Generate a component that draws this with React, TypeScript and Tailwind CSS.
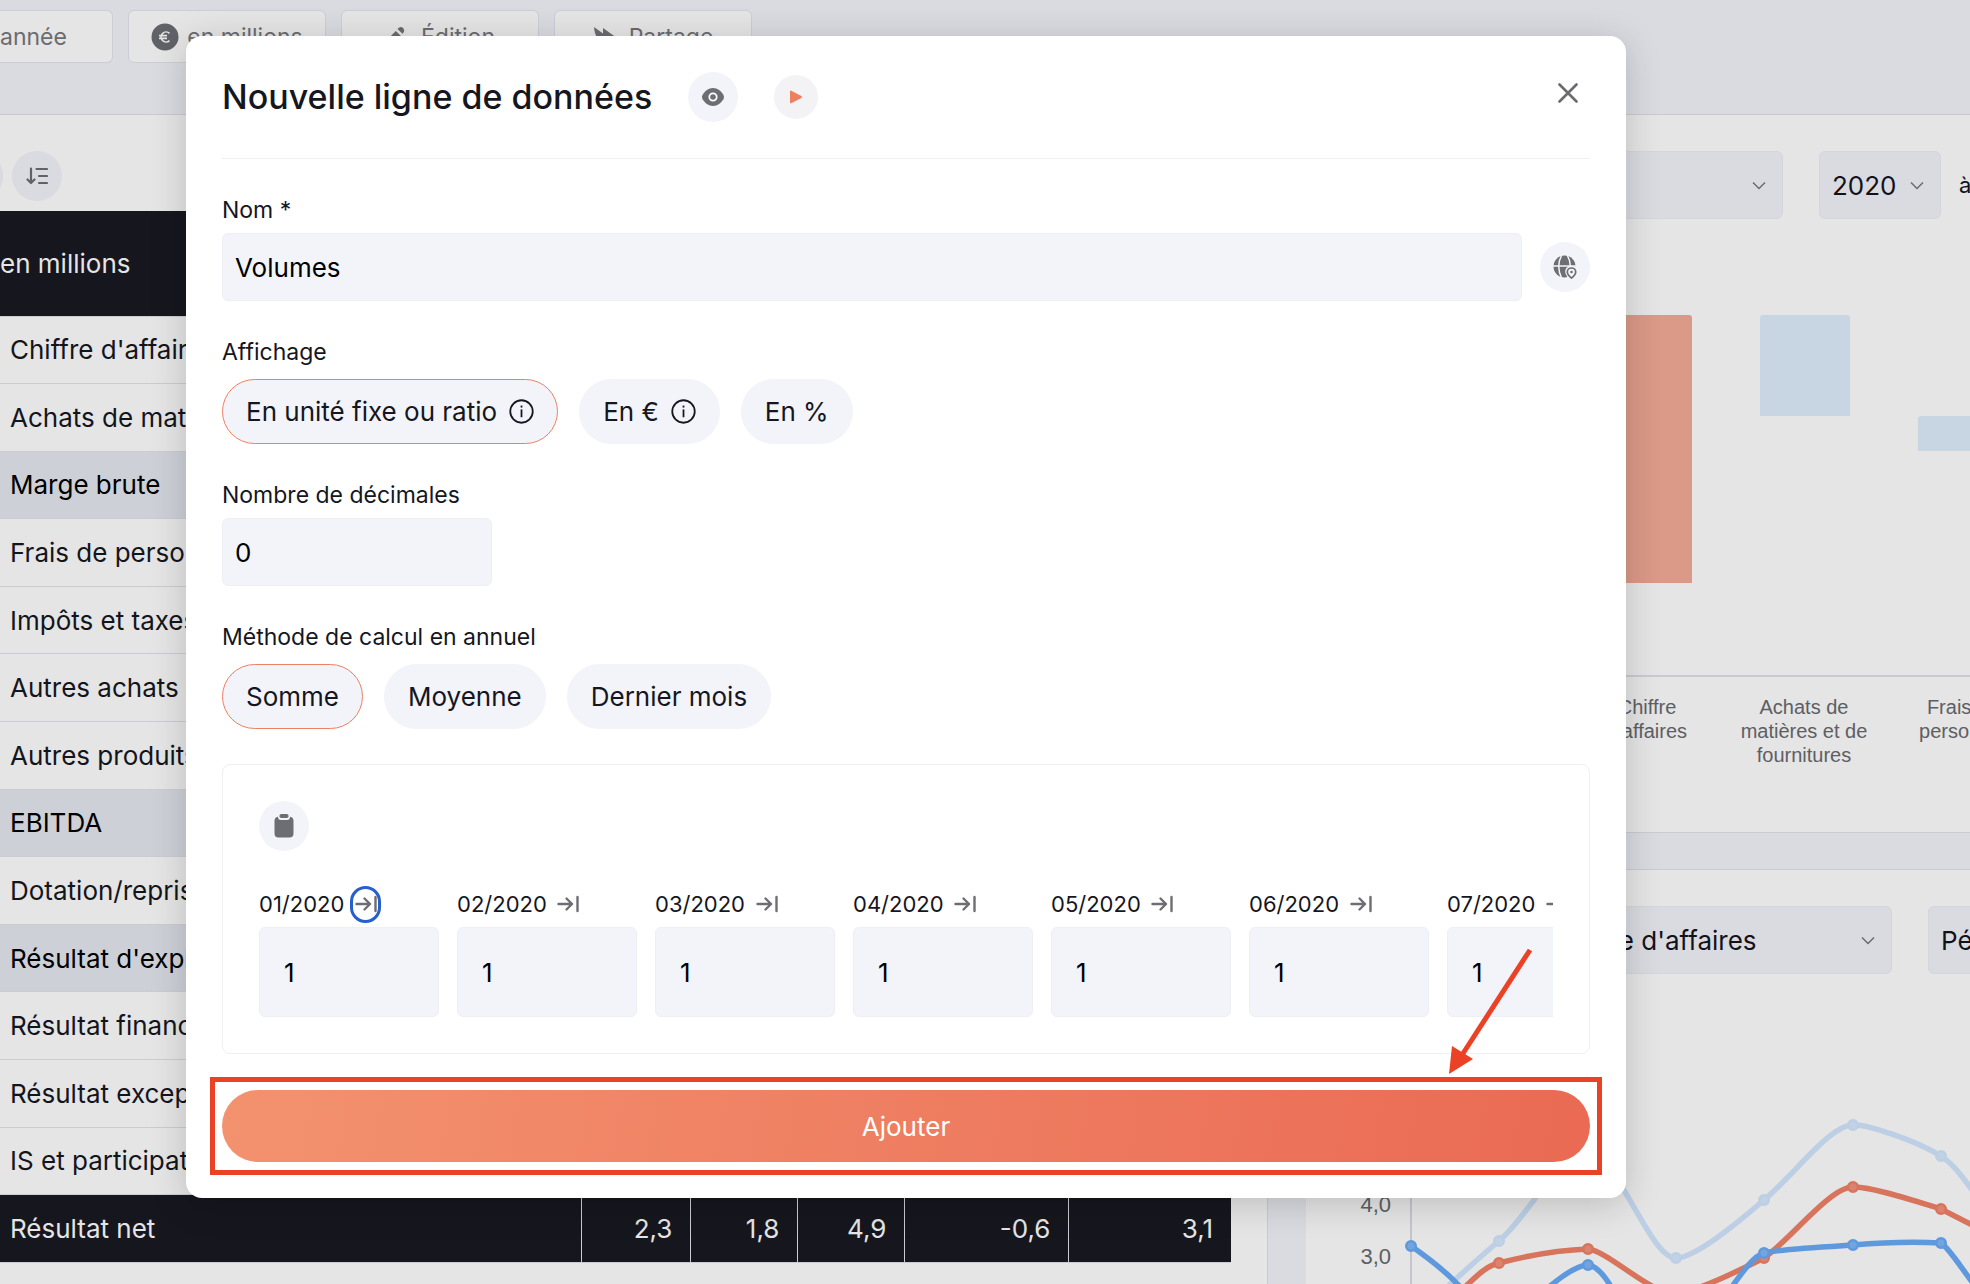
import type { ReactNode } from "react";

const ROWS = [
  { label: "Chiffre d'affaires" },
  { label: "Achats de matières" },
  { label: "Marge brute", total: true },
  { label: "Frais de personnel" },
  { label: "Impôts et taxes" },
  { label: "Autres achats" },
  { label: "Autres produits" },
  { label: "EBITDA", total: true },
  { label: "Dotation/reprise" },
  { label: "Résultat d'exploitation", total: true },
  { label: "Résultat financier" },
  { label: "Résultat exceptionnel" },
  { label: "IS et participation" },
];

const NET = ["2,3", "1,8", "4,9", "-0,6", "3,1"];

const MONTHS = ["01/2020", "02/2020", "03/2020", "04/2020", "05/2020", "06/2020", "07/2020"];

function TopButton({ icon, className = "w-[198px] justify-center rounded-md border", children }: { icon?: ReactNode; className?: string; children: ReactNode }) {
  return (
    <button className={`flex h-[53px] shrink-0 items-center gap-2 border-[#e2e5f0] bg-white text-[23px] leading-7 text-[#77787d] ${className}`}>
      {icon}
      {children}
    </button>
  );
}

function RoundButton({ label, children }: { label: string; children: ReactNode }) {
  return (
    <button
      type="button"
      aria-label={label}
      className="flex size-[50px] shrink-0 items-center justify-center rounded-full bg-[#f3f4fa] text-[#6d6e73]"
    >
      {children}
    </button>
  );
}

function Select({ label, value, className }: { label: string; value: string; className: string }) {
  return (
    <div className={`relative h-[68px] shrink-0 ${className}`}>
      <select
        aria-label={label}
        className="size-full appearance-none rounded-md border border-[#eeeff5] bg-[#f3f4fa] px-3 text-[26px] text-[#15161e]"
      >
        <option>{value}</option>
      </select>
      <svg className="pointer-events-none absolute top-[30px] right-[17px]" width="14" height="10" viewBox="0 0 14 10" fill="none" stroke="#77787d" strokeWidth="1.5">
        <path d="M1 1.5l6 6 6-6" />
      </svg>
    </div>
  );
}

function Pill({ name, label, checked, info }: { name: string; label: string; checked?: boolean; info?: boolean }) {
  return (
    <label className="relative flex h-[65px] items-center gap-3 rounded-full border border-[#f3f4fa] bg-[#f3f4fa] px-[23px] text-[26px] text-[#15161e] has-checked:border-[#ee8062]">
      <input type="radio" name={name} defaultChecked={checked} className="sr-only" />
      {label}
      {info && (
        <svg width="25" height="25" viewBox="0 0 24 24" fill="none" stroke="currentColor" strokeWidth="1.7">
          <circle cx="12" cy="12" r="10.8" />
          <path d="M12 10v7.5" />
          <path d="M12 6.3v1.9" />
        </svg>
      )}
    </label>
  );
}

function EyeIcon() {
  return (
    <svg width="24" height="20" viewBox="0 0 24 20">
      <path fill="currentColor" d="M12 1c4.600 0 8.200 3.200 10.400 6.700q1.400 2.300 0 4.600C20.200 15.800 16.600 19 12 19S3.800 15.800 1.600 12.300q-1.400-2.300 0-4.600C3.800 4.200 7.400 1 12 1z" />
      <circle cx="12" cy="10" r="3.700" fill="none" stroke="#fff" strokeWidth="1.800" />
    </svg>
  );
}

function GlobeIcon() {
  return (
    <svg width="24" height="24" viewBox="0 0 24 24">
      <circle cx="11.500" cy="11.500" r="11" fill="currentColor" />
      <g fill="none" stroke="#f3f4fa" strokeWidth="1.500">
        <path d="M0 11h24M8.800 0C5 7 5 16 8.800 23.500M14.200 0c3.800 7 3.800 16 0 23.500" />
      </g>
      <path fill="#f3f4fa" d="M18.500 10.800c-3.700 0-6.300 2.600-6.300 5.900 0 3.100 2.500 5.300 4.500 7.300H24V13.500c-1.200-1.700-3.200-2.700-5.500-2.700z" />
      <path d="M18.500 13c-2.400 0-4.200 1.700-4.200 4 0 2.600 2.600 4.800 4.200 6 1.600-1.200 4.200-3.400 4.200-6 0-2.300-1.800-4-4.200-4z" fill="none" stroke="currentColor" strokeWidth="1.700" />
      <circle cx="18.500" cy="17" r="1.300" fill="currentColor" />
    </svg>
  );
}

function ClipboardIcon() {
  return (
    <svg width="20" height="24" viewBox="0 0 20 24" fill="currentColor">
      <rect x="5.500" y="0" width="9" height="4" rx="1.800" />
      <path d="M3.800 2.700h.2c0 2 1 3.300 3 3.300h6c2 0 3-1.300 3-3.300h.2Q19.500 3.300 19.500 7v12.500q0 4-4 4h-11q-4 0-4-4V7q0-3.700 3.300-4.300z" />
    </svg>
  );
}

function SortIcon() {
  return (
    <svg width="22" height="18" viewBox="0 0 22 18" fill="none" stroke="currentColor" strokeWidth="2.200" strokeLinecap="round" strokeLinejoin="round">
      <path d="M5 1.500v14M1.500 12.500L5 16l3.500-3.500M10.500 2H21M13 9h8M13 16h8" />
    </svg>
  );
}

function FillRightIcon() {
  return (
    <svg className="shrink-0" width="22" height="18" viewBox="0 0 22 18" fill="none" stroke="currentColor" strokeWidth="2.400" strokeLinecap="round" strokeLinejoin="round">
      <path d="M1.500 9H15M9.500 3.500L15 9l-5.500 5.500M20.500 2v14" />
    </svg>
  );
}

function TopBar() {
  return (
    <header className="flex h-[115px] gap-[15px] border-b border-[#dfe2ec] pt-[10px]">
      <TopButton className="w-[113px] rounded-r-md border-y border-r">année</TopButton>
      <TopButton
        icon={
          <svg width="28" height="28" viewBox="0 0 28 28" fill="none">
            <circle cx="14" cy="14" r="13.500" fill="#6d6e73" />
            <path d="M18.500 10.300A5 5 0 1 0 18.500 17.700M8 12.600h8M8 15.400h8" stroke="#fff" strokeWidth="1.700" />
          </svg>
        }
      >
        en millions
      </TopButton>
      <TopButton
        icon={
          <svg className="mr-1" width="24" height="24" viewBox="0 0 24 24" fill="#77787d">
            <path d="M13.500 3q2.500-2 4.500 0t.5 4.500l-1 1.200-5-4.700zM10.800 6.100l4.900 4.700L6 20.500l-6 1 1.200-5.700z" />
          </svg>
        }
      >
        Édition
      </TopButton>
      <TopButton
        icon={
          <svg className="mr-1" width="24" height="24" viewBox="0 0 24 24" fill="#77787d">
            <path d="M1 2l9 6.500V3l14 10-14 8v-6q-8 0-9-13z" />
          </svg>
        }
      >
        Partage
      </TopButton>
    </header>
  );
}

function DataPanel() {
  return (
    <section className="border-r border-[#dfe2ec] bg-white pt-9 pr-9">
      <div className="-ml-[47px] mb-[10px] flex gap-[9px]">
        <RoundButton label="Filtrer">{null}</RoundButton>
        <RoundButton label="Trier">
          <SortIcon />
        </RoundButton>
      </div>
      <table className="h-[1052px] w-full table-fixed border-collapse text-left text-[26px] text-[#17181f]">
        <colgroup>
          <col />
          <col className="w-[109px]" />
          <col className="w-[107px]" />
          <col className="w-[107px]" />
          <col className="w-[164px]" />
          <col className="w-[162px]" />
        </colgroup>
        <thead>
          <tr className="h-[105px] bg-[#191a22] text-white">
            <th colSpan={6} className="font-normal">en millions</th>
          </tr>
        </thead>
        <tbody>
          {ROWS.map((row) => (
            <tr key={row.label} className={row.total ? "bg-[#e5e8f0] text-black" : "border-y border-[#e2e4eb]"}>
              <th className="pl-[10px] font-normal whitespace-nowrap">{row.label}</th>
              <td colSpan={5} />
            </tr>
          ))}
          <tr className="border-b border-[#e2e4eb] bg-[#191a22] text-white">
            <th className="pl-[10px] font-normal">Résultat net</th>
            {NET.map((v) => (
              <td key={v} className="border-l border-[#e2e4eb] pr-[18px] text-right">
                {v}
              </td>
            ))}
          </tr>
        </tbody>
      </table>
    </section>
  );
}

function WaterfallChart() {
  return (
    <svg className="block" width="664" height="612" viewBox="1306 219 664 612" fontFamily="'Liberation Sans', Arial, sans-serif" fontSize="20" fill="#696a70" textAnchor="middle">
      <path fill="#f4ab97" d="M1602 583V318q0-3 3-3h84q3 0 3 3v265z" />
      <path fill="#dfeffd" d="M1760 416V318q0-3 3-3h84q3 0 3 3v98zM1918 451v-32q0-3 3-3h60v35z" />
      <path stroke="#dfe2ec" strokeWidth="2" d="M1342 676h640" />
      <text x="1647" y="714">Chiffre</text>
      <text x="1647" y="738">d'affaires</text>
      <text x="1804" y="714">Achats de</text>
      <text x="1804" y="738">matières et de</text>
      <text x="1804" y="762">fournitures</text>
      <text x="1963" y="714">Frais de</text>
      <text x="1963" y="738">personnel</text>
    </svg>
  );
}

const SERIES = [
  {
    color: "#d2e7ff",
    path: "M1411 1320C1450 1285 1470 1265 1499 1241C1530 1215 1560 1150 1588 1150C1620 1160 1650 1258 1676 1258C1695 1258 1735 1225 1764 1200C1795 1174 1830 1125 1853 1125C1866 1124 1915 1140 1941 1156C1955 1165 1965 1180 1990 1215",
    points: [[1499, 1241], [1676, 1258], [1764, 1200], [1853, 1125], [1941, 1156]],
  },
  {
    color: "#f18267",
    path: "M1440 1310C1465 1290 1480 1267 1499 1263C1530 1255 1560 1250 1588 1249C1610 1252 1650 1294 1676 1294C1700 1290 1740 1270 1764 1258C1790 1240 1830 1187 1853 1187C1870 1186 1915 1201 1941 1209L1990 1234",
    points: [[1499, 1263], [1588, 1249], [1764, 1258], [1853, 1187], [1941, 1209]],
  },
  {
    color: "#6aabf7",
    path: "M1411 1246C1440 1266 1460 1284 1480 1310M1530 1305C1550 1284 1575 1265 1588 1265C1600 1266 1610 1284 1625 1310M1715 1310C1735 1284 1750 1257 1764 1253C1780 1249 1820 1247 1853 1245Q1900 1241 1941 1243C1950 1248 1965 1275 1990 1305",
    points: [[1411, 1246], [1588, 1265], [1764, 1253], [1853, 1245], [1941, 1243]],
  },
];

function LineChart() {
  return (
    <svg className="block" width="664" height="310" viewBox="1306 974 664 310" fontFamily="'Liberation Sans', Arial, sans-serif" fontSize="22" fill="#696a70" textAnchor="end">
      <path stroke="#dcdde2" strokeWidth="2" d="M1411 1010v280" />
      <text x="1391" y="1212">4,0</text>
      <text x="1391" y="1264">3,0</text>
      {SERIES.map((s) => (
        <g key={s.color} stroke={s.color}>
          <path d={s.path} fill="none" strokeWidth="5.500" />
          {s.points.map(([x, y]) => (
            <g key={x}>
              <circle cx={x} cy={y} r="5" fill={s.color} strokeWidth="2" />
              <circle cx={x} cy={y} r="3.500" fill="#fff" fillOpacity=".15" stroke="none" />
            </g>
          ))}
        </g>
      ))}
    </svg>
  );
}

function ChartsPanel() {
  return (
    <div className="flex min-w-0 flex-col gap-9 overflow-hidden">
      <section className="h-[718px] border-b border-[#dfe2ec] bg-white pt-9">
        <div className="flex items-center gap-9 pl-9">
          <Select label="Graphique" value="" className="w-[441px]" />
          <div className="flex items-center gap-[18px]">
            <Select label="Année de début" value="2020" className="w-[122px]" />
            <span className="text-[22px] text-[#15161e]">à</span>
          </div>
        </div>
        <WaterfallChart />
      </section>
      <section className="border-t border-[#dfe2ec] bg-white pt-9">
        <div className="flex gap-9 pl-9">
          <Select label="Indicateur" value="Évolution : total Chiffre d'affaires" className="w-[550px]" />
          <Select label="Période" value="Période" className="w-[180px]" />
        </div>
        <LineChart />
      </section>
    </div>
  );
}

const labelClass = "block text-[23px] leading-8 text-[#15161e]";
const inputClass = "rounded-md border border-[#eeeff5] bg-[#f3f4fa] text-[26px] text-black outline-none";

function NewLineDialog() {
  return (
    <div role="dialog" aria-labelledby="dialog-title" className="rounded-2xl bg-white px-9 pb-9 shadow-[0_6px_36px_rgba(0,0,0,0.18)]">
      <div className="flex items-center border-b border-[#efeff2] py-9">
        <h2 id="dialog-title" className="text-[34px] leading-[50px] font-medium text-[#15161e]">
          Nouvelle ligne de données
        </h2>
        <div className="ml-9 flex items-center gap-9">
          <RoundButton label="Afficher">
            <EyeIcon />
          </RoundButton>
          <button type="button" aria-label="Lire" className="flex size-11 items-center justify-center rounded-full bg-[#f3f3f5]">
            <svg width="14" height="14" viewBox="0 0 14 14">
              <path d="M1 2q0-2 1.800-1.100l9.600 5q1.600 1.100 0 2.200l-9.600 5Q1 14 1 12z" fill="#ee8062" />
            </svg>
          </button>
        </div>
        <button type="button" aria-label="Fermer" className="mr-3 mb-2 ml-auto text-[#6a6b70]">
          <svg width="20" height="20" viewBox="0 0 20 20" stroke="currentColor" strokeWidth="2.600" strokeLinecap="round">
            <path d="M1.500 1.500l17 17M18.500 1.500l-17 17" />
          </svg>
        </button>
      </div>

      <form className="flex flex-col gap-[35px] pt-[35px]">
        <div>
          <label htmlFor="nom" className={labelClass}>Nom *</label>
          <div className="mt-[7px] flex items-center gap-[18px]">
            <input id="nom" defaultValue="Volumes" className={`${inputClass} h-[68px] min-w-0 flex-1 px-3`} />
            <RoundButton label="Traductions">
              <GlobeIcon />
            </RoundButton>
          </div>
        </div>

        <div role="radiogroup" aria-labelledby="affichage">
          <span id="affichage" className={labelClass}>Affichage</span>
          <div className="mt-[11px] flex gap-[21px]">
            <Pill name="affichage" label="En unité fixe ou ratio" checked info />
            <Pill name="affichage" label="En €" info />
            <Pill name="affichage" label="En %" />
          </div>
        </div>

        <div>
          <label htmlFor="decimales" className={labelClass}>Nombre de décimales</label>
          <input id="decimales" defaultValue="0" className={`${inputClass} mt-[7px] block h-[68px] w-[270px] px-3`} />
        </div>

        <div role="radiogroup" aria-labelledby="methode">
          <span id="methode" className={labelClass}>Méthode de calcul en annuel</span>
          <div className="mt-[11px] flex gap-[21px]">
            <Pill name="methode" label="Somme" checked />
            <Pill name="methode" label="Moyenne" />
            <Pill name="methode" label="Dernier mois" />
          </div>
        </div>

        <div className="flex flex-col gap-9">
          <div className="rounded-lg border border-[#f0f0f3] p-9">
            <RoundButton label="Coller">
              <ClipboardIcon />
            </RoundButton>
            <div className="mt-[37px] flex gap-[18px] overflow-x-clip">
              {MONTHS.map((month, i) => (
                <div key={month} className="w-[180px] shrink-0">
                  <div className="flex h-8 items-center gap-[6px]">
                    <label htmlFor={month} className="text-[22px] leading-8 text-[#15161e]">{month}</label>
                    <button
                      type="button"
                      aria-label={`Recopier ${month}`}
                      className={`flex h-[37px] w-[31px] shrink-0 items-center justify-center rounded-full text-[#6d6e73] ${i === 0 ? "border-3 border-[#2660cc]" : ""}`}
                    >
                      <FillRightIcon />
                    </button>
                  </div>
                  <input id={month} defaultValue="1" className={`${inputClass} mt-[7px] h-[90px] w-full px-6`} />
                </div>
              ))}
            </div>
          </div>

          <div className="relative">
            <button type="button" className="block h-[72px] w-full rounded-full bg-linear-[100deg,#f3926f,#ea6a53] text-[26px] text-white">
              Ajouter
            </button>
            <div className="pointer-events-none absolute -inset-x-3 -inset-y-[13px] border-5 border-[#eb4125]" />
            <svg className="pointer-events-none absolute right-[56px] bottom-[87px]" width="88" height="130" viewBox="0 0 88 130" fill="#eb4125">
              <path d="M84 5L16 110" stroke="#eb4125" strokeWidth="5" />
              <path d="M3 129L6 101l21 13z" />
            </svg>
          </div>
        </div>
      </form>
    </div>
  );
}

export default function App() {
  return (
    <div className="relative h-screen overflow-hidden bg-[#f3f4fa] font-[Inter,sans-serif]">
      <TopBar />
      <main className="grid grid-cols-[minmax(0,1268fr)_minmax(0,664fr)] gap-[38px]">
        <DataPanel />
        <ChartsPanel />
      </main>
      <div className="absolute inset-0 bg-black/10 pt-9 pr-[344px] pl-[186px]">
        <NewLineDialog />
      </div>
    </div>
  );
}
